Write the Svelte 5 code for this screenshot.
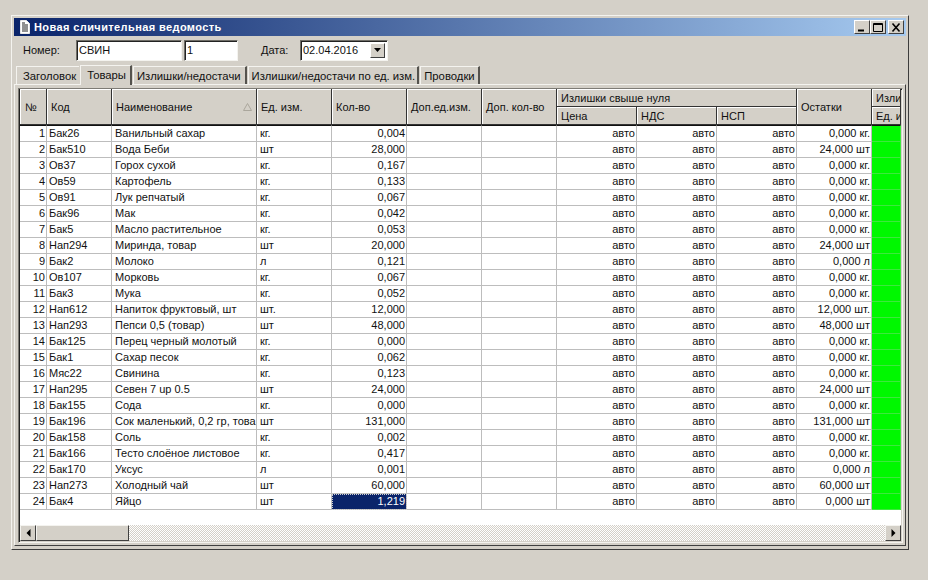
<script>
  const rows = [
    ['Бак26','Ванильный сахар','кг.','0,004','0,000 кг.'],
    ['Бак510','Вода Беби','шт','28,000','24,000 шт'],
    ['Ов37','Горох сухой','кг.','0,167','0,000 кг.'],
    ['Ов59','Картофель','кг.','0,133','0,000 кг.'],
    ['Ов91','Лук репчатый','кг.','0,067','0,000 кг.'],
    ['Бак96','Мак','кг.','0,042','0,000 кг.'],
    ['Бак5','Масло растительное','кг.','0,053','0,000 кг.'],
    ['Нап294','Миринда, товар','шт','20,000','24,000 шт'],
    ['Бак2','Молоко','л','0,121','0,000 л'],
    ['Ов107','Морковь','кг.','0,067','0,000 кг.'],
    ['Бак3','Мука','кг.','0,052','0,000 кг.'],
    ['Нап612','Напиток фруктовый, шт','шт.','12,000','12,000 шт.'],
    ['Нап293','Пепси 0,5 (товар)','шт','48,000','48,000 шт'],
    ['Бак125','Перец черный молотый','кг.','0,000','0,000 кг.'],
    ['Бак1','Сахар песок','кг.','0,062','0,000 кг.'],
    ['Мяс22','Свинина','кг.','0,123','0,000 кг.'],
    ['Нап295','Севен 7 up 0.5','шт','24,000','24,000 шт'],
    ['Бак155','Сода','кг.','0,000','0,000 кг.'],
    ['Бак196','Сок маленький, 0,2 гр, това','шт','131,000','131,000 шт'],
    ['Бак158','Соль','кг.','0,002','0,000 кг.'],
    ['Бак166','Тесто слоёное листовое','кг.','0,417','0,000 кг.'],
    ['Бак170','Уксус','л','0,001','0,000 л'],
    ['Нап273','Холодный чай','шт','60,000','60,000 шт'],
    ['Бак4','Яйцо','шт','1,219','0,000 шт']
  ];
  const widths = [27,65,145,75,75,75,75,80,80,80,75,29];
  const tabs = ['Заголовок','Товары','Излишки/недостачи','Излишки/недостачи по ед. изм.','Проводки'];
</script>

<div class="window">
  <div class="title">
    <svg class="doc" width="10" height="14" viewBox="0 0 10 14">
      <path d="M0.5 0.5H6.5L9.5 3.5V13.5H0.5Z" fill="#fff" stroke="#e8e8e8"/>
      <path d="M2 5H8M2 7H8M2 9H8M2 11H8M2 3H5" stroke="#222" stroke-width="1"/>
    </svg>
    <span class="caption">Новая сличительная ведомость</span>
    <div class="btns">
      <span class="btn"><svg width="12" height="11" viewBox="0 0 12 11"><path d="M2 8.5H8" stroke="#000" stroke-width="2"/></svg></span>
      <span class="btn"><svg width="12" height="11" viewBox="0 0 12 11"><path d="M1.5 1.5H10.5V9.5H1.5Z M1.5 2.5H10.5" fill="none" stroke="#000"/></svg></span>
      <span class="btn close"><svg width="12" height="11" viewBox="0 0 12 11"><path d="M2.5 1.5L9.5 9.5M9.5 1.5L2.5 9.5" stroke="#000" stroke-width="1.6"/></svg></span>
    </div>
  </div>

  <div class="form">
    <span class="lbl num">Номер:</span>
    <div class="input w1">СВИН</div>
    <div class="input w2">1</div>
    <span class="lbl date">Дата:</span>
    <div class="input w3">02.04.2016
      <span class="drop"><svg width="7" height="4" viewBox="0 0 7 4"><path d="M0 0H7L3.5 4Z" fill="#000"/></svg></span>
    </div>
  </div>

  <div class="tabs">
    {#each tabs as t, i}
      <div class="tab" class:active={i === 1}>{t}</div>
    {/each}
  </div>

  <div class="panel">
    <div class="frame">
      <table>
        <colgroup>
          {#each widths as w}<col style="width:{w}px" />{/each}
        </colgroup>
        <thead>
          <tr class="h1">
            <th rowspan="2" class="hno">№</th>
            <th rowspan="2">Код</th>
            <th rowspan="2"><span class="sorted">Наименование<svg width="9" height="8" viewBox="0 0 9 8"><path d="M4.5 0.5L8.5 7.5H0.5Z" fill="none" stroke="#aaa69c"/></svg></span></th>
            <th rowspan="2">Ед. изм.</th>
            <th rowspan="2">Кол-во</th>
            <th rowspan="2">Доп.ед.изм.</th>
            <th rowspan="2">Доп. кол-во</th>
            <th colspan="3" class="low">Излишки свыше нуля</th>
            <th rowspan="2">Остатки</th>
            <th class="low">Излишки</th>
          </tr>
          <tr class="h2">
            <th class="low">Цена</th><th class="low">НДС</th><th class="low">НСП</th><th class="low">Ед. изм.</th>
          </tr>
        </thead>
        <tbody>
          {#each rows as r, i}
            <tr>
              <td class="r">{i + 1}</td>
              <td>{r[0]}</td>
              <td class="t">{r[1]}</td>
              <td class="t">{r[2]}</td>
              <td class="r" class:sel={i === 23}>{r[3]}</td>
              <td></td>
              <td></td>
              <td class="r">авто</td>
              <td class="r">авто</td>
              <td class="r">авто</td>
              <td class="r">{r[4]}</td>
              <td class="green"></td>
            </tr>
          {/each}
        </tbody>
      </table>
      <div class="scroll">
        <span class="arrow"><svg width="5" height="8" viewBox="0 0 5 8"><path d="M4.5 0V8L0.5 4Z" fill="#000"/></svg></span>
        <span class="thumb"></span>
        <span class="track"></span>
        <span class="arrow"><svg width="5" height="8" viewBox="0 0 5 8"><path d="M0.5 0V8L4.5 4Z" fill="#000"/></svg></span>
      </div>
    </div>
  </div>
</div>

<style>
  :global(body) {
    margin: 0;
    background: #d4d0c8;
    overflow: hidden;
  }
  .window {
    box-sizing: border-box;
    width: 898px;
    height: 535px;
    margin: 15px 0 0 11px;
    padding: 2px;
    background: #d4d0c8;
    border: 1px solid;
    border-color: #f4f3ef #3c3c3c #3c3c3c #f4f3ef;
    font: 11px "Liberation Sans", Arial, sans-serif;
    color: #111;
  }
  .title {
    height: 18px;
    display: flex;
    align-items: center;
    padding-left: 6px;
    background: linear-gradient(90deg, #0a246a, #a6caf0);
    color: #fff;
    font-weight: 700;
    letter-spacing: 0.4px;
  }
  .doc { margin-right: 4px; }
  .caption { flex: 1; }
  .btns { display: flex; margin-right: 2px; }
  .btn {
    box-sizing: border-box;
    width: 16px;
    height: 14px;
    display: flex;
    align-items: center;
    justify-content: center;
    background: #d4d0c8;
    border: 1px solid;
    border-color: #fff #404040 #404040 #fff;
  }
  .close { margin-left: 2px; }
  .form {
    height: 22px;
    margin-top: 3px;
    display: flex;
    align-items: center;
  }
  .num { width: 53px; padding-left: 9px; }
  .date { margin-left: 23px; width: 39px; }
  .input {
    box-sizing: border-box;
    height: 21px;
    padding: 2px 0 0 2px;
    background: #fff;
    border: 1px solid;
    border-color: #6e6c66 #f4f3ef #f4f3ef #6e6c66;
    box-shadow: inset 1px 1px 0 #222;
    position: relative;
    line-height: 15px;
  }
  .w1 { width: 106px; margin-right: 2px; }
  .w2 { width: 54px; }
  .w3 { width: 88px; }
  .drop {
    position: absolute;
    right: 2px;
    top: 2px;
    width: 15px;
    height: 15px;
    display: flex;
    align-items: center;
    justify-content: center;
    background: #d4d0c8;
    border: 1px solid;
    border-color: #fff #404040 #404040 #fff;
    box-sizing: border-box;
  }
  .tabs {
    height: 20px;
    margin-top: 3px;
    padding-left: 2px;
    display: flex;
    align-items: flex-end;
  }
  .tab {
    box-sizing: border-box;
    height: 18px;
    padding: 3px 3px 0 3px;
    margin-right: 1px;
    border-top: 1px solid #f4f3ef;
    border-left: 1px solid #f4f3ef;
    border-right: 2px solid #55534e;
    font-size: 11.3px;
    white-space: nowrap;
  }
  .tab:first-child {
    padding-left: 6px;
    border-right: 0;
  }
  .tab.active {
    height: 20px;
    padding: 3px 4px 0 6px;
    position: relative;
    z-index: 1;
    background: #d4d0c8;
    margin-bottom: -1px;
  }
  .tab:nth-child(3) { padding-right: 4px; }
  .tab:nth-child(4) { padding-right: 2px; }
  .panel {
    box-sizing: border-box;
    height: 462px;
    width: 892px;
    padding: 3px;
    border: 1px solid;
    border-color: #f4f3ef #404040 #404040 #f4f3ef;
  }
  .frame {
    box-sizing: border-box;
    width: 885px;
    height: 455px;
    background: #fff;
    border: 1px solid;
    border-color: #7d7b75 #f4f3ef #f4f3ef #7d7b75;
    box-shadow: inset 1px 1px 0 #222, inset -1px -1px 0 #d4d0c8;
    padding: 0 1px 1px 1px;
    overflow: hidden;
  }
  table {
    table-layout: fixed;
    border-collapse: separate;
    border-spacing: 0;
    width: 881px;
  }
  th {
    box-sizing: border-box;
    background: #d4d0c8;
    font-weight: 400;
    text-align: left;
    padding: 0 0 0 4px;
    border-right: 1px solid #333;
    border-bottom: 1px solid #333;
    box-shadow: inset 1px 1px 0 #fff;
    overflow: hidden;
    white-space: nowrap;
  }
  th.low { padding-top: 1px; }
  .h1 th { height: 18px; }
  .h2 th { height: 18px; }
  thead tr:first-child th[rowspan] { height: 36px; }
  .hno { padding-left: 5px; }
  .sorted {
    display: flex;
    justify-content: space-between;
    align-items: center;
    padding-right: 4px;
  }
  td {
    box-sizing: border-box;
    height: 16px;
    padding: 0 2px;
    border-right: 1px solid #bdbdbd;
    border-bottom: 1px solid #bdbdbd;
    overflow: hidden;
    white-space: nowrap;
    line-height: 15px;
  }
  tbody tr:first-child td { border-top: 1px solid #111; height: 17px; }
  .t { padding-left: 3px; }
  .r { text-align: right; padding-right: 1px; }
  .green { background: #00f800; border-color: #3ee83e; }
  .sel {
    background: #0a246a;
    color: #fff;
    outline: 1px dotted #d0d0d0;
    outline-offset: -1px;
  }
  .scroll {
    display: flex;
    height: 16px;
    margin-top: 15px;
    width: 881px;
  }
  .arrow, .thumb {
    box-sizing: border-box;
    height: 16px;
    background: #d4d0c8;
    border: 1px solid;
    border-color: #f4f3ef #404040 #404040 #f4f3ef;
    display: flex;
    align-items: center;
    justify-content: center;
  }
  .arrow { width: 16px; }
  .thumb { width: 93px; }
  .track {
    flex: 1;
    background: repeating-conic-gradient(#d4d0c8 0 25%, #fff 0 50%) 0 0 / 2px 2px;
  }
</style>
